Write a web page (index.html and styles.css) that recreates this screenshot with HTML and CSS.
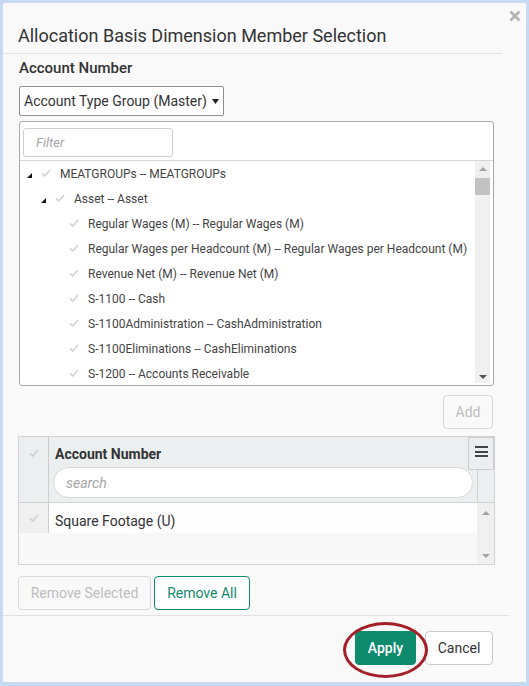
FILE: index.html
```html
<!DOCTYPE html>
<html lang="en">
<head>
  <meta charset="UTF-8">
  <meta name="viewport" content="width=device-width, initial-scale=1.0">
  <title>Allocation Basis Dimension Member Selection</title>
  <link rel="stylesheet" href="styles.css">
</head>
<body>
  <div class="dialog">
    <button class="close-btn" aria-label="Close">
      <svg width="12" height="12" viewBox="0 0 12 12"><path d="M1.5 1.5 L10.5 10.5 M10.5 1.5 L1.5 10.5" stroke="#b3b3b3" stroke-width="2.6" fill="none"/></svg>
    </button>

    <div class="dialog-header">
      <h1 class="dialog-title">Allocation Basis Dimension Member Selection</h1>
    </div>

    <div class="dialog-body">
      <div class="field-label">Account Number</div>
      <div class="select-box">
        <span>Account Type Group (Master)</span>
        <svg width="7" height="5" viewBox="0 0 7 5"><polygon points="0,0 7,0 3.5,5" fill="#222"/></svg>
      </div>

      <div class="tree-panel">
        <div class="tree-filter">
          <input class="filter-input" type="text" placeholder="Filter">
        </div>
        <div class="tree-list">
          <ul class="tree-items">
            <li class="tree-row lvl-0"><span class="toggle"><svg width="5" height="5" viewBox="0 0 5 5"><polygon points="5,0 5,5 0,5" fill="#111"/></svg></span><span class="check"><svg width="10" height="8" viewBox="0 0 10 8"><path d="M1 4.3 L3.8 7 L9 1" stroke="#d3d3d3" stroke-width="1.6" fill="none"/></svg></span><span class="label">MEATGROUPs -- MEATGROUPs</span></li>
            <li class="tree-row lvl-1"><span class="toggle"><svg width="5" height="5" viewBox="0 0 5 5"><polygon points="5,0 5,5 0,5" fill="#111"/></svg></span><span class="check"><svg width="10" height="8" viewBox="0 0 10 8"><path d="M1 4.3 L3.8 7 L9 1" stroke="#d3d3d3" stroke-width="1.6" fill="none"/></svg></span><span class="label">Asset -- Asset</span></li>
            <li class="tree-row lvl-2"><span class="toggle"></span><span class="check"><svg width="10" height="8" viewBox="0 0 10 8"><path d="M1 4.3 L3.8 7 L9 1" stroke="#d3d3d3" stroke-width="1.6" fill="none"/></svg></span><span class="label">Regular Wages (M) -- Regular Wages (M)</span></li>
            <li class="tree-row lvl-2"><span class="toggle"></span><span class="check"><svg width="10" height="8" viewBox="0 0 10 8"><path d="M1 4.3 L3.8 7 L9 1" stroke="#d3d3d3" stroke-width="1.6" fill="none"/></svg></span><span class="label">Regular Wages per Headcount (M) -- Regular Wages per Headcount (M)</span></li>
            <li class="tree-row lvl-2"><span class="toggle"></span><span class="check"><svg width="10" height="8" viewBox="0 0 10 8"><path d="M1 4.3 L3.8 7 L9 1" stroke="#d3d3d3" stroke-width="1.6" fill="none"/></svg></span><span class="label">Revenue Net (M) -- Revenue Net (M)</span></li>
            <li class="tree-row lvl-2"><span class="toggle"></span><span class="check"><svg width="10" height="8" viewBox="0 0 10 8"><path d="M1 4.3 L3.8 7 L9 1" stroke="#d3d3d3" stroke-width="1.6" fill="none"/></svg></span><span class="label">S-1100 -- Cash</span></li>
            <li class="tree-row lvl-2"><span class="toggle"></span><span class="check"><svg width="10" height="8" viewBox="0 0 10 8"><path d="M1 4.3 L3.8 7 L9 1" stroke="#d3d3d3" stroke-width="1.6" fill="none"/></svg></span><span class="label">S-1100Administration -- CashAdministration</span></li>
            <li class="tree-row lvl-2"><span class="toggle"></span><span class="check"><svg width="10" height="8" viewBox="0 0 10 8"><path d="M1 4.3 L3.8 7 L9 1" stroke="#d3d3d3" stroke-width="1.6" fill="none"/></svg></span><span class="label">S-1100Eliminations -- CashEliminations</span></li>
            <li class="tree-row lvl-2"><span class="toggle"></span><span class="check"><svg width="10" height="8" viewBox="0 0 10 8"><path d="M1 4.3 L3.8 7 L9 1" stroke="#d3d3d3" stroke-width="1.6" fill="none"/></svg></span><span class="label">S-1200 -- Accounts Receivable</span></li>
          </ul>
          <div class="scrollbar tree-scroll">
            <svg width="8" height="4" viewBox="0 0 8 4"><polygon points="0,4 8,4 4,0" fill="#a3a3a3"/></svg>
            <div class="thumb"></div>
            <div class="spacer"></div>
            <svg width="8" height="4" viewBox="0 0 8 4"><polygon points="0,0 8,0 4,4" fill="#555"/></svg>
          </div>
        </div>
      </div>

      <div class="add-row">
        <button class="btn btn-disabled add-btn">Add</button>
      </div>

      <div class="grid">
        <div class="grid-header">
          <div class="check-cell">
            <svg width="10" height="8" viewBox="0 0 10 8"><path d="M1 4.3 L3.8 7 L9 1" stroke="#cfcfcf" stroke-width="1.6" fill="none"/></svg>
          </div>
          <div class="header-main">
            <div class="header-title">Account Number</div>
            <input class="search-input" type="text" placeholder="search">
          </div>
          <div class="gutter"></div>
          <button class="menu-btn" aria-label="Column menu">
            <span></span><span></span><span></span>
          </button>
        </div>
        <div class="grid-body">
          <div class="rows">
            <div class="grid-row">
              <div class="check-cell">
                <svg width="10" height="8" viewBox="0 0 10 8"><path d="M1 4.3 L3.8 7 L9 1" stroke="#cfcfcf" stroke-width="1.6" fill="none"/></svg>
              </div>
              <div class="row-text">Square Footage (U)</div>
            </div>
          </div>
          <div class="scrollbar grid-scroll">
            <svg width="8" height="4" viewBox="0 0 8 4"><polygon points="0,4 8,4 4,0" fill="#a3a3a3"/></svg>
            <div class="spacer"></div>
            <svg width="8" height="4" viewBox="0 0 8 4"><polygon points="0,0 8,0 4,4" fill="#a3a3a3"/></svg>
          </div>
        </div>
      </div>

      <div class="remove-row">
        <button class="btn btn-disabled remove-selected">Remove Selected</button>
        <button class="btn btn-outline remove-all">Remove All</button>
      </div>
    </div>

    <div class="dialog-footer">
      <div class="apply-wrap">
        <button class="btn btn-primary apply-btn">Apply</button>
        <div class="highlight-ring"></div>
      </div>
      <button class="btn btn-default cancel-btn">Cancel</button>
    </div>
  </div>
</body>
</html>
```

FILE: styles.css
```css
* {
  margin: 0;
  padding: 0;
  box-sizing: border-box;
}
body {
  background: #c6daf3;
  font-family: Roboto, 'Liberation Sans', Arial, sans-serif;
  color: #333;
  width: 529px;
  height: 686px;
  overflow: hidden;
}
.dialog {
  position: relative;
  width: 523px;
  height: 679px;
  margin: 3px 0 0 3px;
  background: #f9f9f9;
  display: flex;
  flex-direction: column;
}
.close-btn {
  position: absolute;
  top: 7px;
  right: 5px;
  width: 12px;
  height: 12px;
  border: none;
  background: none;
  display: flex;
}
.dialog-header {
  padding: 21px 0 5px 15px;
  margin-right: 24px;
  border-bottom: 1px solid #e2e2e2;
}
.dialog-title {
  font-size: 18px;
  font-weight: 400;
  line-height: 24px;
  color: #333;
}
.dialog-body {
  padding: 4px 31px 0 15px;
  display: flex;
  flex-direction: column;
}
.field-label {
  font-size: 15px;
  font-weight: 500;
  line-height: 20px;
  color: #333;
  margin-left: 1px;
}
.select-box {
  margin: 8px 0 0 1px;
  width: 205px;
  height: 30px;
  border: 1px solid #8f8f8f;
  border-radius: 2px;
  background: #fff;
  display: flex;
  align-items: center;
  gap: 5px;
  padding-left: 4px;
  font-size: 14px;
  color: #333;
}
.tree-panel {
  margin: 5px 1px 0 1px;
  height: 265px;
  border: 1px solid #a8a8a8;
  border-radius: 3px;
  background: #fff;
  display: flex;
  flex-direction: column;
}
.tree-filter {
  padding: 6px 0 3px 3px;
  border-bottom: 1px solid #d6d6d6;
}
.filter-input {
  width: 150px;
  height: 29px;
  border: 1px solid #cdcdcd;
  border-radius: 3px;
  padding-left: 12px;
  font-family: inherit;
  font-size: 13px;
  outline: none;
}
.filter-input::placeholder,
.search-input::placeholder {
  font-style: italic;
  color: #a6a6a6;
}
.tree-list {
  flex: 1;
  display: flex;
  min-height: 0;
}
.tree-items {
  flex: 1;
  min-width: 0;
  list-style: none;
  overflow: hidden;
}
.tree-row {
  height: 25px;
  display: flex;
  align-items: center;
  font-size: 12px;
  color: #444;
  white-space: nowrap;
}
.lvl-0 { padding-left: 4px; }
.lvl-1 { padding-left: 18px; }
.lvl-2 { padding-left: 32px; }
.toggle {
  flex-shrink: 0;
  width: 14px;
  display: flex;
  padding-left: 3px;
  padding-top: 3px;
}
.check {
  flex-shrink: 0;
  width: 22px;
  display: flex;
  padding-left: 3px;
  padding-bottom: 2px;
}
.label {
  flex-shrink: 0;
}
.scrollbar {
  flex-shrink: 0;
  background: #f0f0f0;
  display: flex;
  flex-direction: column;
  align-items: center;
}
.tree-scroll {
  width: 15px;
  margin: 0 3px 2px 0;
  padding: 6px 0 4px;
}
.tree-scroll .thumb {
  align-self: stretch;
  height: 17px;
  margin-top: 7px;
  background: #c2c2c2;
}
.spacer {
  flex: 1;
}
.add-row {
  display: flex;
  justify-content: flex-end;
  margin: 9px 2px 0 0;
}
.btn {
  height: 34px;
  border-radius: 4px;
  font-family: inherit;
  font-size: 14px;
  padding: 0 12px;
  background: #fff;
  border: 1px solid #ccc;
  color: #333;
}
.btn-disabled {
  background: #f9f9f9;
  border-color: #d9d9d9;
  color: #bdbdbd;
}
.add-btn {
  width: 50px;
  padding: 0;
}
.grid {
  margin-top: 7px;
  height: 129px;
  border: 1px solid #d2d2d2;
  display: flex;
  flex-direction: column;
}
.grid-header {
  position: relative;
  display: flex;
  background: #eceff0;
  border-bottom: 1px solid #d2d2d2;
  height: 66px;
}
.check-cell {
  width: 30px;
  border-right: 1px solid #cdcdcd;
  display: flex;
  justify-content: center;
  padding-top: 12px;
}
.header-main {
  flex: 1;
  padding: 0 4px;
}
.header-title {
  font-size: 14px;
  font-weight: 700;
  line-height: 20px;
  padding: 7px 0 0 2px;
  color: #333;
}
.search-input {
  display: block;
  width: 100%;
  height: 31px;
  margin-top: 3px;
  border: 1px solid #d9d9d9;
  border-radius: 16px;
  background: #fff;
  padding-left: 12px;
  font-family: inherit;
  font-size: 14px;
  outline: none;
}
.gutter {
  width: 17px;
  border-left: 1px solid #d2d2d2;
}
.menu-btn {
  position: absolute;
  top: 0;
  right: 0;
  width: 26px;
  height: 33px;
  border: 1px solid #cdcdcd;
  background: #eceff0;
  display: flex;
  flex-direction: column;
  align-items: center;
  justify-content: center;
  gap: 2.5px;
  padding-bottom: 4px;
}
.menu-btn span {
  display: block;
  width: 13px;
  height: 2px;
  background: #444;
}
.grid-body {
  flex: 1;
  display: flex;
  background: #f8f8f8;
}
.rows {
  flex: 1;
}
.grid-row {
  display: flex;
  height: 30px;
  background: #fdfdfd;
}
.grid-row .check-cell {
  background: #f0f0f0;
  padding-top: 11px;
}
.row-text {
  font-size: 14px;
  line-height: 20px;
  padding: 8px 0 2px 6px;
  color: #333;
}
.grid-scroll {
  width: 17px;
  padding: 8px 0 6px;
}
.remove-row {
  display: flex;
  gap: 3px;
  margin-top: 11px;
}
.remove-selected {
  width: 133px;
  padding: 0;
}
.btn-outline {
  border-color: #11896c;
  color: #11896c;
  background: #fff;
}
.remove-all {
  width: 96px;
  padding: 0;
}
.dialog-footer {
  margin: 5px 17px 0 0;
  border-top: 1px solid #e2e2e2;
  padding: 15px 16px 0 0;
  display: flex;
  justify-content: flex-end;
  gap: 9px;
}
.apply-wrap {
  position: relative;
}
.btn-primary {
  background: #0e8a6d;
  border-color: #0e8a6d;
  color: #fff;
  font-weight: 500;
}
.apply-btn {
  width: 61px;
  padding: 0;
}
.highlight-ring {
  position: absolute;
  left: -12px;
  top: -9px;
  width: 85px;
  height: 56px;
  border: 3px solid #a41f27;
  border-radius: 50%;
}
.cancel-btn {
  width: 68px;
  padding: 0;
}
```
